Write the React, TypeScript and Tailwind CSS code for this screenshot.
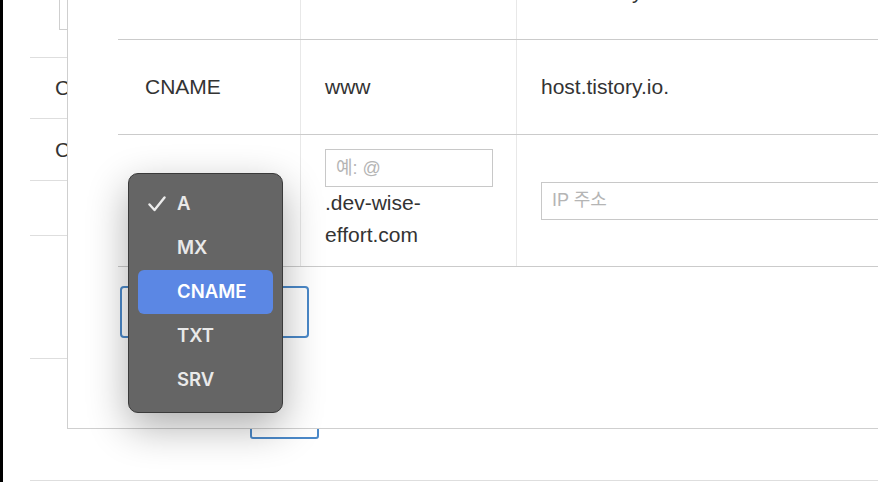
import React from 'react';

const MENU_ITEMS = ['A', 'MX', 'CNAME', 'TXT', 'SRV'];

const CheckIcon = () => (
  <svg width="18" height="16" viewBox="0 0 18 16" fill="none">
    <path d="M1.5 8.5 L6.5 14 L16.5 1.5" stroke="#ececec" strokeWidth="2.4" strokeLinecap="round" strokeLinejoin="round" />
  </svg>
);

const TypeMenu: React.FC<{ checked: string; active: string }> = ({ checked, active }) => (
  <div className="absolute left-[125px] top-[173px] w-[155px] h-[240px] rounded-[10px] bg-[#656565] border border-[#3a3a3a] shadow-[0_14px_40px_rgba(0,0,0,0.32)] pt-[8px] px-[9px] font-['Inter',sans-serif]">
    {MENU_ITEMS.map(item => (
      <div
        key={item}
        className={
          item === active
            ? 'h-[44px] flex items-center pl-[10px] rounded-[6px] bg-[#5b87e4] text-white'
            : 'h-[44px] flex items-center pl-[10px] rounded-[6px] text-[#e9e9e9]'
        }
      >
        <span className="w-[29px] flex items-center">{item === checked && <CheckIcon />}</span>
        <span className="text-[18.5px] font-semibold">{item}</span>
      </div>
    ))}
  </div>
);

const Cell: React.FC<{ first?: boolean; children?: React.ReactNode }> = ({ children, first }) => (
  <div
    className={
      first
        ? 'w-[182px] shrink-0 pl-[27px] flex items-center'
        : 'w-[216px] shrink-0 border-l border-[#e8e8e8] pl-[24px] flex items-center'
    }
  >
    {children}
  </div>
);

export default function App() {
  return (
    <div className="relative w-[878px] h-[482px] overflow-hidden bg-white border-l-[3px] border-black text-[#333] font-['Liberation_Sans','Noto_Sans_CJK_KR',sans-serif]">
      {/* page behind the dialog */}
      <div className="pl-[27px]">
        <div className="h-[57px]">
          <div className="ml-[29px] h-[30px] w-[220px] border border-t-0 border-[#cfcfcf]" />
        </div>
        <div className="h-[61px] border-t border-[#dedede] pl-[25px] flex items-center text-[21px]">CNAME</div>
        <div className="h-[62px] border-t border-[#dedede] pl-[25px] flex items-center text-[21px]">CNAME</div>
        <div className="h-[55px] border-t border-[#dedede]" />
        <div className="h-[123px] border-t border-[#dedede]" />
        <div className="h-[122px] border-t border-[#dedede]">
          <div className="ml-[220px] mt-[46px] w-[69px] h-[34px] border-2 border-[#4b89c9] rounded-[3px]" />
        </div>
        <div className="border-t border-[#dedede]" />
      </div>

      {/* dialog */}
      <div className="absolute left-[64px] top-[-57px] right-[-40px] h-[486px] bg-white border border-[#cfcfcf] pl-[50px]">
        <div className="flex h-[96px] border-b border-[#cbcbcb] text-[21px]">
          <Cell first>CNAME</Cell>
          <Cell>mail</Cell>
          <div className="flex-1 min-w-0 border-l border-[#e8e8e8] pl-[24px] flex items-center">host.tistory.io.</div>
        </div>
        <div className="flex h-[95px] border-b border-[#cbcbcb] text-[21px]">
          <Cell first>CNAME</Cell>
          <Cell>www</Cell>
          <div className="flex-1 min-w-0 border-l border-[#e8e8e8] pl-[24px] flex items-center">host.tistory.io.</div>
        </div>
        <div className="flex h-[132px] border-b border-[#cbcbcb] text-[21px]">
          <div className="w-[182px] shrink-0 pl-[27px] flex items-center">
            <div className="w-[130px] h-[34px] border border-[#bbb] rounded-[4px] pl-[8px] flex items-center text-[18px]">A</div>
          </div>
          <div className="w-[216px] shrink-0 border-l border-[#e8e8e8] pl-[24px] pt-[14px]">
            <input
              placeholder="예: @"
              className="block w-[168px] h-[38px] border border-[#c8c8c8] px-[10px] text-[18px] outline-none placeholder:text-[#b5b5b5]"
            />
            <div className="w-[168px] leading-[32px]">.dev-wise-effort.com</div>
          </div>
          <div className="flex-1 min-w-0 border-l border-[#e8e8e8] pl-[24px] flex items-center">
            <input
              placeholder="IP 주소"
              className="block w-[360px] h-[38px] border border-[#c8c8c8] px-[10px] text-[18px] outline-none placeholder:text-[#b5b5b5]"
            />
          </div>
        </div>
        <button className="block mt-[19px] ml-[2px] w-[189px] h-[52px] border-2 border-[#4b89c9] rounded-[4px] bg-white" />
      </div>

      <TypeMenu checked="A" active="CNAME" />
    </div>
  );
}
